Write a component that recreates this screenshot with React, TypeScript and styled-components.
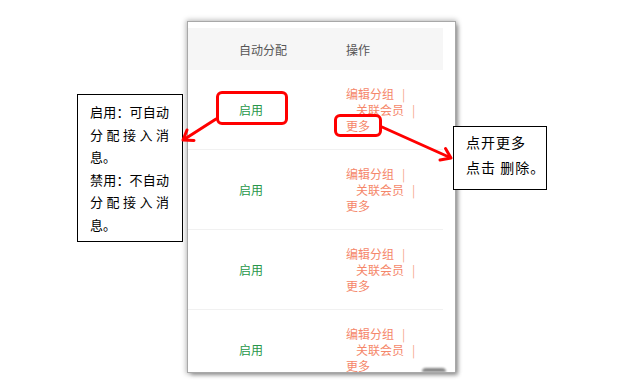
import React from 'react'
import styled, { createGlobalStyle } from 'styled-components'

const GlobalStyle = createGlobalStyle`
    html, body {
        margin: 0;
        background: #fff;
    }
    body {
        font-family: "Noto Sans CJK SC", "Noto Sans", sans-serif;
        text-spacing-trim: space-all;
    }
`

const Stage = styled.div`
    position: relative;
    width: 642px;
    height: 389px;
    overflow: hidden;
    box-sizing: border-box;
    padding: 22px 0 0 188px;
`

const Panel = styled.div`
    position: relative;
    width: 267px;
    height: 350px;
    box-sizing: border-box;
    padding-top: 6px;
    overflow: hidden;
    background: #fff;
    box-shadow: 0 0 0 1px #a8a8a8, 0 0 5px 2px rgba(0, 0, 0, 0.28), 3px 3px 4px rgba(0, 0, 0, 0.3);
`

const Grid = styled.div`
    display: grid;
    grid-template-columns: 158px 1fr;
    align-items: center;
    width: 255px;
    box-sizing: border-box;
    font-size: 12px;
`

const Header = styled(Grid)`
    height: 42px;
    background: #f6f6f6;
    color: #555;
`

const Row = styled(Grid)`
    height: 80px;
    border-bottom: 1px solid #f1f1f1;
`

const Cell = styled.div<{ $first?: boolean }>`
    padding-left: ${ p => p.$first ? '51px' : '0' };
`

const Status = styled(Cell)`
    color: #27974a;
`

const Actions = styled.div`
    display: flex;
    flex-direction: column;
    line-height: 16px;
    color: #f5876a;
`

const ActionLine = styled.div<{ $indent?: boolean }>`
    padding-left: ${ p => p.$indent ? '10px' : '0' };
    white-space: nowrap;
`

const Pipe = styled.span`
    margin-left: 8px;
    color: #f7a58e;
`

const ScrollThumb = styled.div`
    position: absolute;
    right: 9px;
    bottom: 0;
    width: 24px;
    height: 4px;
    border-radius: 12px 12px 0 0;
    background: rgba(80, 80, 80, 0.7);
    filter: blur(1px);
`

const Highlight = styled.div<{ $x: number; $y: number; $w: number; $h: number }>`
    position: absolute;
    left: ${ p => p.$x }px;
    top: ${ p => p.$y }px;
    width: ${ p => p.$w }px;
    height: ${ p => p.$h }px;
    box-sizing: border-box;
    border: 3px solid #f00;
    border-radius: 6px;
`

const LeftNote = styled.div`
    position: absolute;
    left: 77px;
    top: 94px;
    width: 106px;
    height: 148px;
    box-sizing: border-box;
    padding: 6px 13px 0 12px;
    border: 1px solid #000;
    background: #fff;
    font-size: 13px;
    line-height: 22.6px;
    color: #000;
`

const NoteText = styled.p`
    margin: 0;
    text-align: justify;
`

const RightNote = styled.div`
    position: absolute;
    left: 453px;
    top: 126px;
    width: 94px;
    height: 64px;
    box-sizing: border-box;
    padding: 3px 0 0 12px;
    border: 1px solid #000;
    background: #fff;
    font-size: 14px;
    line-height: 25px;
    letter-spacing: 1px;
    color: #000;
    white-space: nowrap;
`

const Arrows = styled.svg`
    position: absolute;
    left: 0;
    top: 0;
    pointer-events: none;
`

const rows = [0, 1, 2, 3]

const App: React.FC = () => {
    return (
        <Stage lang="zh-CN">
            <GlobalStyle />
            <Panel>
                <Header>
                    <Cell $first>自动分配</Cell>
                    <Cell>操作</Cell>
                </Header>
                { rows.map(i => (
                    <Row key={ i }>
                        <Status $first>启用</Status>
                        <Actions>
                            <ActionLine>编辑分组<Pipe>|</Pipe></ActionLine>
                            <ActionLine $indent>关联会员<Pipe>|</Pipe></ActionLine>
                            <ActionLine>更多</ActionLine>
                        </Actions>
                    </Row>
                )) }
                <ScrollThumb />
            </Panel>

            <Highlight $x={ 216 } $y={ 91 } $w={ 72 } $h={ 34 } />
            <Highlight $x={ 334 } $y={ 114 } $w={ 48 } $h={ 23 } />

            <LeftNote>
                <NoteText>启用：可自动分配接入消息。</NoteText>
                <NoteText>禁用：不自动分配接入消息。</NoteText>
            </LeftNote>

            <RightNote>
                点开更多<br />
                点击 删除。
            </RightNote>

            <Arrows width="642" height="389" viewBox="0 0 642 389">
                <g stroke="#f00" strokeWidth="3" strokeLinecap="round" strokeLinejoin="round" fill="none">
                    <line x1="216" y1="119" x2="184" y2="139.5" />
                    <polyline points="194,140.5 183,140 187,130" />
                    <line x1="382" y1="127" x2="450" y2="157.5" />
                    <polyline points="445.5,148.5 451,158 440,160" />
                </g>
            </Arrows>
        </Stage>
    )
}

export default App
